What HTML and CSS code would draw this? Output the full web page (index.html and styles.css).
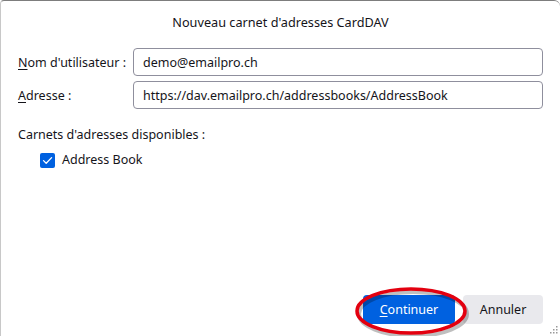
FILE: index.html
```html
<!DOCTYPE html>
<html lang="fr">
<head>
    <meta charset="UTF-8">
    <title>Nouveau carnet d'adresses CardDAV</title>
    <link rel="stylesheet" href="styles.css">
</head>
<body>
    <div class="dialog">
        <h1 class="title">Nouveau carnet d'adresses CardDAV</h1>

        <div class="fields">
            <label for="username"><u>N</u>om d'utilisateur :</label>
            <input type="text" id="username" value="demo@emailpro.ch">
            <label for="location"><u>A</u>dresse :</label>
            <input type="text" id="location" value="https://dav.emailpro.ch/addressbooks/AddressBook">
        </div>

        <div class="books">
            <div class="books-label">Carnets d'adresses disponibles :</div>
            <label class="book">
                <span class="check">
                    <svg width="15" height="15" viewBox="0 0 15 15"><path d="M3.5 7.6 L6.2 10.3 L11.6 4.6" fill="none" stroke="#fff" stroke-width="1.3" stroke-linecap="round" stroke-linejoin="round"/></svg>
                </span>
                Address Book
            </label>
        </div>

        <div class="buttons">
            <button class="btn primary"><u>C</u>ontinuer</button>
            <button class="btn">Annuler</button>
            <svg class="highlight" width="120" height="56" viewBox="0 0 120 56">
                <ellipse cx="61" cy="29" rx="54" ry="22" fill="none" stroke="rgba(0,0,0,0.25)" stroke-width="4"/>
                <ellipse cx="59" cy="26" rx="54" ry="22" fill="none" stroke="#e3000f" stroke-width="3.5"/>
            </svg>
        </div>

        <svg class="grip" width="8" height="8" viewBox="0 0 8 8">
            <rect x="6" y="0" width="1.5" height="1.5" fill="#999"/>
            <rect x="3" y="3" width="1.5" height="1.5" fill="#999"/>
            <rect x="6" y="3" width="1.5" height="1.5" fill="#999"/>
            <rect x="0" y="6" width="1.5" height="1.5" fill="#999"/>
            <rect x="3" y="6" width="1.5" height="1.5" fill="#999"/>
            <rect x="6" y="6" width="1.5" height="1.5" fill="#999"/>
        </svg>
    </div>
</body>
</html>
```

FILE: styles.css
```css
* {
    margin: 0;
    padding: 0;
    box-sizing: border-box;
}

body {
    width: 560px;
    height: 336px;
    overflow: hidden;
    background: #fff;
    font-family: "Noto Sans", "Open Sans", sans-serif;
    font-size: 12.5px;
    color: #15141a;
}

.dialog {
    position: relative;
    height: 336px;
    display: flex;
    flex-direction: column;
    border-top: 1px solid #7d7d7d;
    border-left: 1px solid #c8c8c8;
    border-radius: 4px 6px 0 0;
    padding: 0 17px 12px 17px;
}

.title {
    font-size: 12.7px;
    font-weight: normal;
    text-align: center;
    line-height: 16px;
    padding-top: 13px;
}

.fields {
    display: grid;
    grid-template-columns: 108px 1fr;
    column-gap: 7px;
    row-gap: 5px;
    align-items: center;
    margin-top: 18px;
}

.fields label {
    white-space: nowrap;
}

.fields label u,
.btn u {
    text-decoration: underline;
    text-underline-offset: 2px;
}

.fields input {
    height: 28px;
    border: 1px solid #8f8f9d;
    border-radius: 4px;
    padding: 0 9px;
    font-family: inherit;
    font-size: 12.5px;
    color: #15141a;
    background: #fff;
}

.books {
    margin-top: 18px;
}

.books-label {
    line-height: 16px;
}

.book {
    display: flex;
    align-items: center;
    gap: 7px;
    margin-top: 9px;
    padding-left: 22px;
    line-height: 16px;
}

.check {
    display: flex;
    width: 15px;
    height: 15px;
    background: #0061e0;
    border-radius: 2px;
}

.buttons {
    position: relative;
    margin-top: auto;
    display: flex;
    justify-content: flex-end;
    gap: 8px;
}

.btn {
    height: 29px;
    padding: 0 15px;
    border: none;
    border-radius: 4px;
    background: #e9e9ed;
    font-family: inherit;
    font-size: 12.5px;
    color: #15141a;
}

.btn.primary {
    width: 92px;
    background: #0061e0;
    color: #fff;
}

.btn:not(.primary) {
    width: 80px;
}

.highlight {
    position: absolute;
    right: 71px;
    top: -10px;
}

.grip {
    position: absolute;
    right: 2px;
    bottom: 2px;
}
```
